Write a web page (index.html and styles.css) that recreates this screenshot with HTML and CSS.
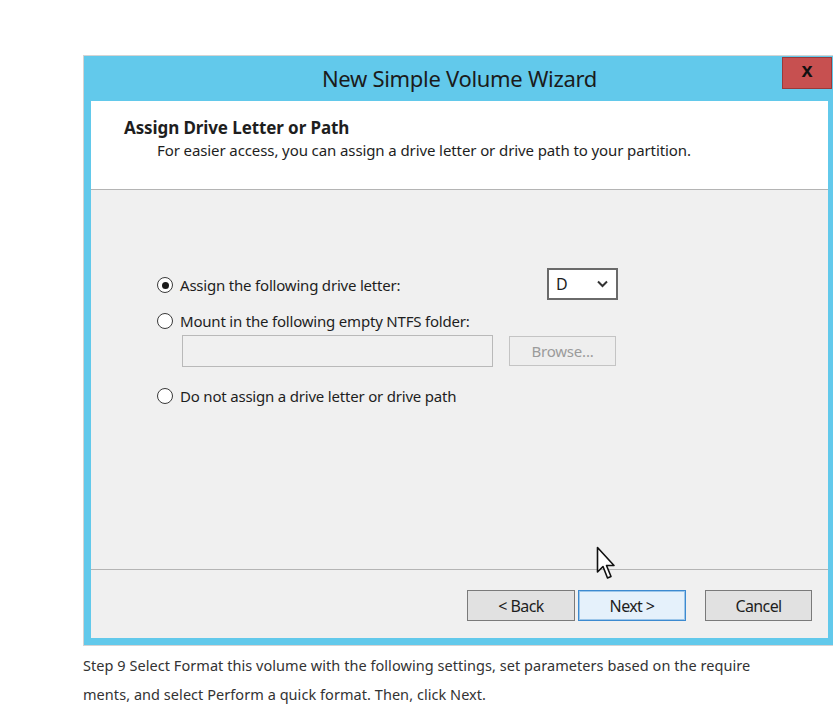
FILE: index.html
```html
<!DOCTYPE html>
<html>
<head>
<meta charset="utf-8">
<link rel="stylesheet" href="styles.css">
</head>
<body>
<div class="page">
  <div class="window">
    <div class="titlebar">
      <div class="title">New Simple Volume Wizard</div>
      <div class="close">x</div>
    </div>
    <div class="client">
      <div class="header">
        <div class="h-title">Assign Drive Letter or Path</div>
        <div class="h-sub">For easier access, you can assign a drive letter or drive path to your partition.</div>
      </div>
      <div class="main">
        <div class="row row1">
          <div class="opt"><span class="radio checked"></span><span class="lbl">Assign the following drive letter:</span></div>
          <div class="combo"><span>D</span>
            <svg class="chev" width="11" height="8" viewBox="0 0 11 8"><path d="M1 1.5 L5.5 6 L10 1.5" fill="none" stroke="#333" stroke-width="2"/></svg>
          </div>
        </div>
        <div class="opt row2"><span class="radio"></span><span class="lbl">Mount in the following empty NTFS folder:</span></div>
        <div class="pathrow">
          <div class="textbox"></div>
          <div class="browse">Browse...</div>
        </div>
        <div class="opt row3"><span class="radio"></span><span class="lbl">Do not assign a drive letter or drive path</span></div>
      </div>
      <div class="footer">
        <div class="btn">&lt; Back</div>
        <div class="btn next">Next &gt;</div>
        <div class="btn cancel">Cancel</div>
      </div>
      <svg class="cursor" width="20" height="35" viewBox="0 0 20 35"><path d="M1.5 1.5 L1.5 26 L7 20.5 L11.5 32 L15 30.5 L10.5 19.5 L18 19.5 Z" fill="#fff" stroke="#111" stroke-width="1.6" stroke-linejoin="round"/></svg>
    </div>
  </div>
  <p class="caption">Step 9 Select Format this volume with the following settings, set parameters based on the require<br>ments, and select Perform a quick format. Then, click Next.</p>
</div>
</body>
</html>
```

FILE: styles.css
```css
html, body {
  margin: 0;
  padding: 0;
  background: #fff;
  overflow: hidden;
}
.page {
  padding: 55px 0 0 83px;
  width: 760px;
}
.window {
  width: 737px;
  border: 1px solid #d4d4d4;
  background: #62c9eb;
  padding: 0 7px 7px 7px;
  font-family: "Noto Sans", "Open Sans", sans-serif;
  color: #1e1e1e;
}
.titlebar {
  position: relative;
  height: 45px;
  display: flex;
  align-items: center;
  justify-content: center;
}
.title {
  font-size: 22px;
  letter-spacing: -0.3px;
  color: #1b1b1b;
  margin-top: -2px;
}
.close {
  position: absolute;
  right: -4px;
  top: 1px;
  width: 50px;
  height: 32px;
  background: #c75050;
  border: 1px solid #9a3a3a;
  box-sizing: border-box;
  display: flex;
  align-items: center;
  justify-content: center;
  font-family: "Liberation Sans", sans-serif;
  font-weight: bold;
  font-size: 20px;
  color: #111;
  padding-bottom: 5px;
}
.client {
  position: relative;
  background: #f0f0f0;
}
.header {
  background: #fff;
  height: 89px;
  border-bottom: 1px solid #b4b4b4;
  box-sizing: border-box;
  padding: 16px 0 0 33px;
}
.h-title {
  font-weight: bold;
  font-size: 17px;
  letter-spacing: -0.1px;
  line-height: 22px;
}
.h-sub {
  font-size: 15px;
  letter-spacing: -0.1px;
  line-height: 22px;
  padding-left: 33px;
  margin-top: 0;
}
.main {
  height: 380px;
  box-sizing: border-box;
  border-bottom: 1px solid #b4b4b4;
  padding: 78px 0 0 66px;
  font-size: 15px;
  letter-spacing: -0.2px;
}
.row1 {
  display: flex;
  align-items: center;
  height: 32px;
}
.row1 .opt { width: 390px; padding-top: 2px; }
.opt {
  display: flex;
  align-items: center;
  height: 20px;
}
.radio {
  width: 14px;
  height: 14px;
  border: 1px solid #3a3a3a;
  border-radius: 50%;
  background: #fff;
  margin-right: 7px;
  display: flex;
  align-items: center;
  justify-content: center;
  flex: none;
}
.radio.checked::after {
  content: "";
  width: 7px;
  height: 7px;
  border-radius: 50%;
  background: #1c1c1c;
}
.combo {
  width: 71px;
  height: 32px;
  box-sizing: border-box;
  border: 2px solid #6a6a6a;
  background: #fff;
  display: flex;
  align-items: center;
  justify-content: space-between;
  padding: 0 8px 0 7px;
  font-size: 16px;
}
.row2 { margin-top: 11px; }
.pathrow {
  display: flex;
  align-items: flex-start;
  margin: 4px 0 0 25px;
}
.textbox {
  width: 311px;
  height: 32px;
  box-sizing: border-box;
  border: 1px solid #b9b9b9;
  background: #f0f0f0;
}
.browse {
  margin: 1px 0 0 16px;
  width: 107px;
  height: 30px;
  box-sizing: border-box;
  border: 1px solid #c4c4c4;
  background: #eeeeee;
  color: #9b9b9b;
  display: flex;
  align-items: center;
  justify-content: center;
  font-size: 15px;
}
.row3 { margin-top: 19px; }
.footer {
  height: 68px;
  box-sizing: border-box;
  padding: 20px 16px 0 0;
  display: flex;
  justify-content: flex-end;
  align-items: flex-start;
  gap: 3px;
}
.btn {
  width: 108px;
  height: 31px;
  box-sizing: border-box;
  border: 1px solid #7a7a7a;
  background: #e1e1e1;
  display: flex;
  align-items: center;
  justify-content: center;
  font-size: 16px;
  letter-spacing: -0.6px;
  color: #1e1e1e;
}
.btn.next {
  border: 1px solid #3c8ad0;
  background: #e5f1fb;
  box-shadow: inset 0 0 0 1px #9cc6ea;
}
.btn.cancel {
  margin-left: 16px;
  width: 107px;
}
.cursor {
  position: absolute;
  left: 505px;
  top: 445px;
}
.caption {
  margin: 5px 0 0 0;
  font-family: "Noto Sans", "Open Sans", sans-serif;
  font-size: 14.5px;
  line-height: 29px;
  color: #333;
  letter-spacing: 0.05px;
}
```
